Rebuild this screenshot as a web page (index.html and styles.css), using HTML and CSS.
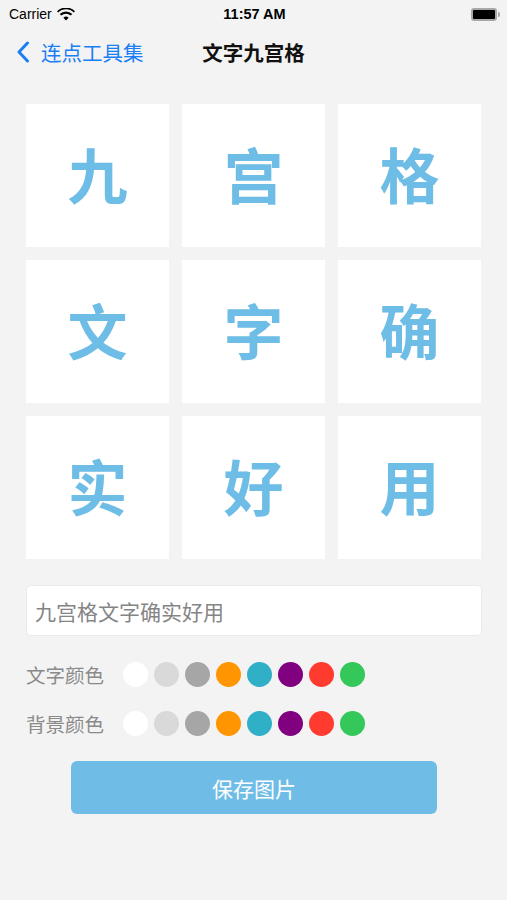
FILE: index.html
```html
<!DOCTYPE html>
<html lang="zh">
<head>
<meta charset="utf-8">
<link rel="stylesheet" href="styles.css">
</head>
<body>
<div class="status">
  <div class="carrier">Carrier
    <svg class="wifi" width="18" height="13" viewBox="0 0 18 13"><path d="M9 12.5l2.6-2.7a3.7 3.7 0 0 0-5.2 0z" fill="#000"/><path d="M4.3 7.6a6.6 6.6 0 0 1 9.4 0l1.6-1.6a8.9 8.9 0 0 0-12.6 0z" fill="#000"/><path d="M1.3 4.6a10.8 10.8 0 0 1 15.4 0l1.3-1.4a12.8 12.8 0 0 0-18 0z" fill="#000"/></svg>
  </div>
  <div class="time">11:57 AM</div>
  <div class="battery"><span class="cell"></span><span class="nub"></span></div>
</div>
<div class="nav">
  <div class="back">
    <svg width="14" height="22" viewBox="0 0 14 22"><path d="M11.5 2L3 11l8.5 9" fill="none" stroke="#1a7ff5" stroke-width="3" stroke-linecap="round" stroke-linejoin="round"/></svg>
    <span>连点工具集</span>
  </div>
  <div class="title">文字九宫格</div>
</div>
<div class="grid">
  <div class="cell-box">九</div>
  <div class="cell-box">宫</div>
  <div class="cell-box">格</div>
  <div class="cell-box">文</div>
  <div class="cell-box">字</div>
  <div class="cell-box">确</div>
  <div class="cell-box">实</div>
  <div class="cell-box">好</div>
  <div class="cell-box">用</div>
</div>
<div class="input">九宫格文字确实好用</div>
<div class="color-row">
  <span class="label">文字颜色</span>
  <div class="dots">
    <span class="dot white"></span><span class="dot light"></span><span class="dot gray"></span><span class="dot orange"></span><span class="dot teal"></span><span class="dot purple"></span><span class="dot red"></span><span class="dot green"></span>
  </div>
</div>
<div class="color-row">
  <span class="label">背景颜色</span>
  <div class="dots">
    <span class="dot white"></span><span class="dot light"></span><span class="dot gray"></span><span class="dot orange"></span><span class="dot teal"></span><span class="dot purple"></span><span class="dot red"></span><span class="dot green"></span>
  </div>
</div>
<div class="btn-wrap"><div class="btn">保存图片</div></div>
</body>
</html>
```
FILE: styles.css
```css
html, body {
  margin: 0;
  padding: 0;
}
body {
  width: 507px;
  height: 900px;
  background: #f3f3f3;
  font-family: "Noto Sans CJK SC", "Liberation Sans", sans-serif;
  overflow: hidden;
}
.status {
  height: 28px;
  display: flex;
  align-items: center;
  justify-content: space-between;
  padding: 0 7px 0 9px;
  font-family: "Liberation Sans", "Noto Sans", sans-serif;
  font-size: 14px;
  color: #000;
}
.carrier {
  display: flex;
  align-items: center;
  gap: 5px;
  width: 120px;
}
.time {
  font-weight: bold;
  font-size: 14.5px;
}
.battery {
  width: 120px;
  display: flex;
  justify-content: flex-end;
  align-items: center;
}
.battery .cell {
  width: 22px;
  height: 9px;
  background: #000;
  border-radius: 3px;
  border: 2px solid #a8a8a8;
}
.battery .nub {
  width: 2px;
  height: 5px;
  background: #a8a8a8;
  border-radius: 0 2px 2px 0;
  margin-left: 1px;
}
.nav {
  height: 48px;
  display: flex;
  align-items: center;
  justify-content: center;
  position: relative;
}
.back {
  position: absolute;
  left: 16px;
  top: 0;
  height: 48px;
  display: flex;
  align-items: center;
  gap: 11px;
  color: #1a7ff5;
  font-size: 20.5px;
}
.title {
  font-size: 20.5px;
  font-weight: bold;
  color: #111;
}
.grid {
  margin: 28px 25px 0 26px;
  display: grid;
  grid-template-columns: repeat(3, 143px);
  grid-auto-rows: 143px;
  gap: 13px;
}
.cell-box {
  background: #fff;
  display: flex;
  align-items: center;
  justify-content: center;
  font-size: 60px;
  font-weight: bold;
  color: #6ebde6;
  line-height: 1;
  padding-bottom: 6px;
  box-sizing: border-box;
}
.input {
  margin: 26px 25px 0 26px;
  height: 51px;
  background: #fff;
  border-radius: 5px;
  border: 1px solid #ebebeb;
  box-sizing: border-box;
  display: flex;
  align-items: center;
  padding-left: 8px;
  font-size: 21px;
  color: #858585;
}
.color-row {
  display: flex;
  align-items: center;
  margin-left: 26px;
  height: 25px;
  margin-top: 26px;
  font-size: 19.5px;
  color: #8a8a8a;
}
.color-row + .color-row {
  margin-top: 24px;
}
.label {
  width: 97px;
}
.dots {
  display: flex;
  gap: 6px;
}
.dot {
  width: 25px;
  height: 25px;
  border-radius: 50%;
}
.white { background: #fff; }
.light { background: #d9d9d9; }
.gray { background: #a6a6a6; }
.orange { background: #ff9500; }
.teal { background: #30b0c7; }
.purple { background: #800080; }
.red { background: #ff3b30; }
.green { background: #34c759; }
.btn-wrap {
  margin: 25px 70px 0 71px;
}
.btn {
  height: 53px;
  background: #6fbde6;
  border-radius: 6px;
  display: flex;
  align-items: center;
  justify-content: center;
  color: #fff;
  font-size: 21px;
}
```
